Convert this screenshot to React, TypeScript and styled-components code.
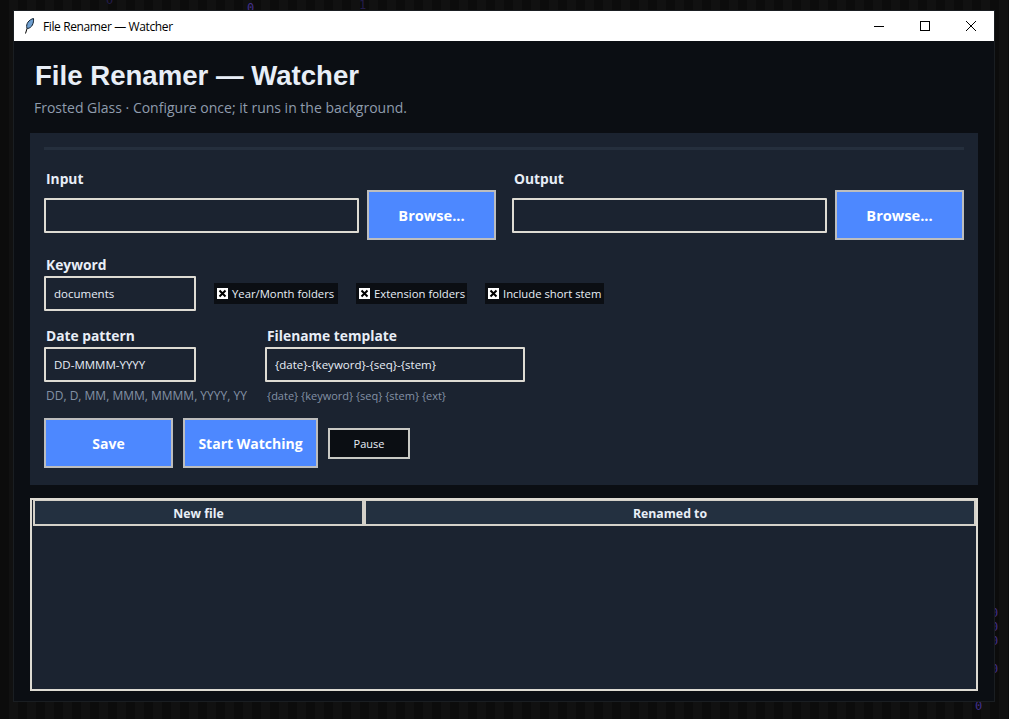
import React from 'react';
import styled, { createGlobalStyle } from 'styled-components';

const GlobalStyle = createGlobalStyle`
  * { box-sizing: border-box; }
  html, body { margin: 0; height: 100%; overflow: hidden; }
  body {
    background: repeating-linear-gradient(90deg, #0c0c0c 0 9px, #111111 9px 18px);
    font-family: "Open Sans", "Noto Sans", sans-serif;
  }
`;

const Desktop = styled.div`
  position: relative;
  width: 1009px;
  height: 719px;
  padding: 11px 0 0 14px;
`;

const MatrixGlyph = styled.span<{ $x: number; $y: number; $dim?: boolean }>`
  position: absolute;
  left: ${(p) => p.$x}px;
  top: ${(p) => p.$y}px;
  font: 12px/14px "DejaVu Sans Mono", monospace;
  color: ${(p) => (p.$dim ? '#241c4a' : '#43308c')};
`;

const Window = styled.div`
  position: relative;
  width: 980px;
  height: 690px;
  background: #0b0e13;
  box-shadow: 0 0 0 1px #1a1e22;
  display: flex;
  flex-direction: column;
`;

const TitleBar = styled.div`
  height: 30px;
  flex: none;
  background: #ffffff;
  display: flex;
  align-items: center;
  padding-left: 10px;
  color: #000000;
`;

const TitleText = styled.span`
  font-size: 12px;
  margin-left: 8px;
  letter-spacing: -0.38px;
`;

const WindowButtons = styled.div`
  margin-left: auto;
  display: flex;
`;

const WindowButton = styled.div`
  width: 46px;
  height: 30px;
  display: flex;
  align-items: center;
  justify-content: center;
`;

const Header = styled.header`
  height: 92px;
  flex: none;
  padding: 18px 21px 0;
`;

const Title = styled.h1`
  margin: 0;
  font: 700 27.6px/33px "Liberation Sans", Arial, sans-serif;
  color: #e8eef7;
`;

const Subtitle = styled.p`
  margin: 6px 0 0 -1px;
  font-size: 14px;
  line-height: 20px;
  color: #8f9cad;
`;

const Panel = styled.section`
  margin: 0 16px;
  height: 352px;
  flex: none;
  background: #1b2330;
  padding: 14px 14px 16px;
  display: flex;
  flex-direction: column;
`;

const Separator = styled.div`
  height: 3px;
  background: #252f3d;
  margin-bottom: 20px;
`;

const PathGrid = styled.div`
  display: grid;
  grid-template-columns: 452px 452px;
  column-gap: 16px;
`;

const FieldLabel = styled.label`
  display: block;
  font-size: 13.8px;
  line-height: 18px;
  margin-bottom: 2px;
  font-weight: 700;
  color: #e8eef7;
  padding-left: 2px;
  white-space: nowrap;
`;

const PathRow = styled.div`
  display: flex;
  align-items: center;
  gap: 8px;
`;

const TextInput = styled.input<{ $width?: number }>`
  height: 35px;
  width: ${(p) => (p.$width ? `${p.$width}px` : 'auto')};
  flex: ${(p) => (p.$width ? 'none' : '1')};
  min-width: 0;
  display: block;
  background: #1b2330;
  border: 2px solid #dedbd3;
  border-radius: 1px;
  outline: none;
  padding: 0 8px;
  font: 11.5px "Open Sans", sans-serif;
  color: #e8eef7;
`;

const PrimaryButton = styled.button<{ $width: number }>`
  width: ${(p) => p.$width}px;
  height: 50px;
  flex: none;
  background: #4d88ff;
  border: 2px solid #bdbdbd;
  padding: 0;
  font: 700 14px "Open Sans", sans-serif;
  color: #ffffff;
`;

const BrowseButton = styled(PrimaryButton)`
  font-size: 14.6px;
`;

const KeywordRow = styled.div`
  display: flex;
  align-items: flex-end;
  margin-top: 16px;
`;

const Field = styled.div`
  flex: none;
`;

const Checks = styled.div`
  display: flex;
  gap: 18px;
  margin-left: 18px;
  height: 35px;
  align-items: center;
`;

const Check = styled.div<{ $width: number }>`
  width: ${(p) => p.$width}px;
  height: 21px;
  background: #0b0e13;
  display: flex;
  align-items: center;
  padding-left: 3px;
  gap: 4px;
  font-size: 11.3px;
  color: #e8eef7;
  white-space: nowrap;
`;

const CheckBox = styled.span`
  width: 11px;
  height: 11px;
  flex: none;
  background: #ffffff;
  display: flex;
`;

const PatternRow = styled.div`
  display: flex;
  gap: 69px;
  margin-top: 16px;
`;

const Hint = styled.div<{ $size: number }>`
  font-size: ${(p) => p.$size}px;
  line-height: 15px;
  margin-top: 6px;
  padding-left: 2px;
  color: #8391a5;
  white-space: nowrap;
  width: 152px;
`;

const ActionRow = styled.div`
  display: flex;
  align-items: center;
  gap: 10px;
  margin-top: 15px;
`;

const PauseButton = styled.button`
  width: 82px;
  height: 31px;
  background: #0b0e13;
  border: 2px solid #c9c9c4;
  padding: 0;
  font: 11px "Open Sans", sans-serif;
  color: #e8eef7;
`;

const LogTable = styled.section`
  margin: 13px 16px 0;
  height: 193px;
  flex: none;
  background: #1b2330;
  border: 2px solid #dedbd3;
`;

const HeaderRow = styled.div`
  display: grid;
  grid-template-columns: 331px 612px;
  padding: 0 1px;
`;

const HeaderCell = styled.div`
  height: 26px;
  background: #233040;
  border: 2px solid #d4d1c9;
  border-top-width: 1px;
  font-size: 12.3px;
  font-weight: 700;
  line-height: 25px;
  text-align: center;
  color: #e8eef7;
`;

const Feather = () => (
  <svg width="11" height="16" viewBox="0 0 11 16">
    <path d="M1.5 15.5 L3.5 9" stroke="#000" strokeWidth="1" fill="none" />
    <path d="M3 10 C1.5 6 5 1.5 9.5 0.5 C10 5 8 10 3.5 10.5 Z" fill="#6f9fd0" stroke="#10202f" strokeWidth="1" />
  </svg>
);

const MinimizeIcon = () => (
  <svg width="10" height="10" viewBox="0 0 10 10"><path d="M0 5.5H10" stroke="#000" /></svg>
);

const MaximizeIcon = () => (
  <svg width="10" height="10" viewBox="0 0 10 10"><rect x="0.5" y="0.5" width="9" height="9" fill="none" stroke="#000" /></svg>
);

const CloseIcon = () => (
  <svg width="10" height="10" viewBox="0 0 10 10"><path d="M0 0L10 10M10 0L0 10" stroke="#000" /></svg>
);

const CrossMark = () => (
  <svg width="11" height="11" viewBox="0 0 11 11"><path d="M2.5 2.5L8.5 8.5M8.5 2.5L2.5 8.5" stroke="#000" strokeWidth="2" /></svg>
);

const glyphs = [
  { x: 106, y: -7, c: '0', dim: true },
  { x: 247, y: 1, c: '0' },
  { x: 359, y: -2, c: '1', dim: true },
  { x: 975, y: 699, c: '0' },
  { x: 991, y: 606, c: '0' },
  { x: 991, y: 620, c: '0' },
  { x: 991, y: 634, c: '0' },
  { x: 991, y: 662, c: '0' },
];

const checks = [
  { label: 'Year/Month folders', width: 124 },
  { label: 'Extension folders', width: 111 },
  { label: 'Include short stem', width: 119 },
];

export default function App() {
  return (
    <>
      <GlobalStyle />
      <Desktop>
        {glyphs.map((g) => (
          <MatrixGlyph key={`${g.x}-${g.y}`} $x={g.x} $y={g.y} $dim={g.dim}>{g.c}</MatrixGlyph>
        ))}
        <Window>
          <TitleBar>
            <Feather />
            <TitleText>File Renamer — Watcher</TitleText>
            <WindowButtons>
              <WindowButton><MinimizeIcon /></WindowButton>
              <WindowButton><MaximizeIcon /></WindowButton>
              <WindowButton><CloseIcon /></WindowButton>
            </WindowButtons>
          </TitleBar>
          <Header>
            <Title>File Renamer — Watcher</Title>
            <Subtitle>Frosted Glass · Configure once; it runs in the background.</Subtitle>
          </Header>
          <Panel>
            <Separator />
            <PathGrid>
              <div>
                <FieldLabel>Input</FieldLabel>
                <PathRow>
                  <TextInput />
                  <BrowseButton $width={129}>Browse...</BrowseButton>
                </PathRow>
              </div>
              <div>
                <FieldLabel>Output</FieldLabel>
                <PathRow>
                  <TextInput />
                  <BrowseButton $width={129}>Browse...</BrowseButton>
                </PathRow>
              </div>
            </PathGrid>
            <KeywordRow>
              <Field>
                <FieldLabel>Keyword</FieldLabel>
                <TextInput $width={152} defaultValue="documents" />
              </Field>
              <Checks>
                {checks.map((c) => (
                  <Check key={c.label} $width={c.width}>
                    <CheckBox><CrossMark /></CheckBox>
                    {c.label}
                  </Check>
                ))}
              </Checks>
            </KeywordRow>
            <PatternRow>
              <Field>
                <FieldLabel>Date pattern</FieldLabel>
                <TextInput $width={152} defaultValue="DD-MMMM-YYYY" />
                <Hint $size={12}>DD, D, MM, MMM, MMMM, YYYY, YY</Hint>
              </Field>
              <Field>
                <FieldLabel>Filename template</FieldLabel>
                <TextInput $width={260} defaultValue="{date}-{keyword}-{seq}-{stem}" />
                <Hint $size={11}>{'{date} {keyword} {seq} {stem} {ext}'}</Hint>
              </Field>
            </PatternRow>
            <ActionRow>
              <PrimaryButton $width={129}>Save</PrimaryButton>
              <PrimaryButton $width={135}>Start Watching</PrimaryButton>
              <PauseButton>Pause</PauseButton>
            </ActionRow>
          </Panel>
          <LogTable>
            <HeaderRow>
              <HeaderCell>New file</HeaderCell>
              <HeaderCell>Renamed to</HeaderCell>
            </HeaderRow>
          </LogTable>
        </Window>
      </Desktop>
    </>
  );
}
